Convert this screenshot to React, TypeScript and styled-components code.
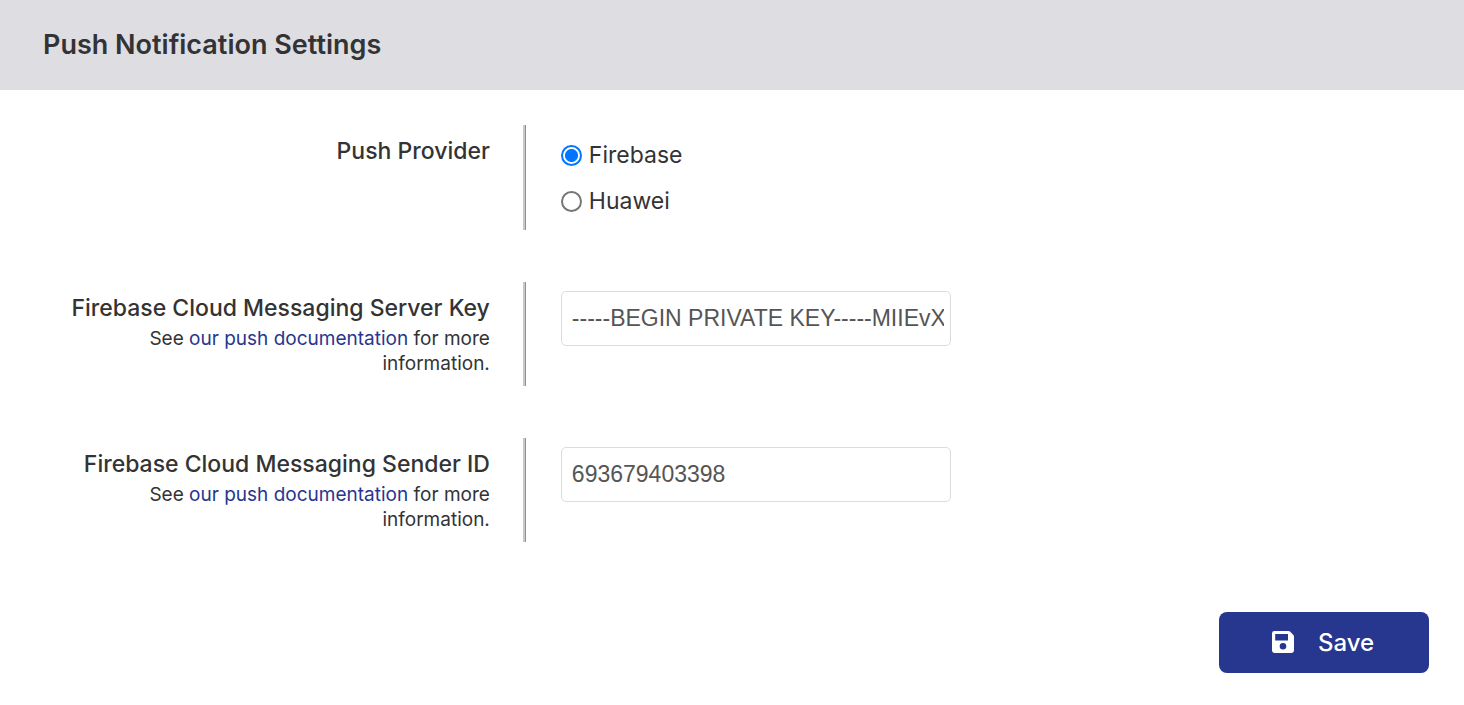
import React, { useState } from "react";
import styled, { createGlobalStyle } from "styled-components";

const GlobalStyle = createGlobalStyle`
  *, *::before, *::after { box-sizing: border-box; }
  body {
    margin: 0;
    background: #fff;
    color: #333335;
    font-family: Inter, "Liberation Sans", sans-serif;
  }
`;

const Header = styled.header`
  display: flex;
  align-items: center;
  height: 90px;
  padding: 0 43px;
  background: #dedde2;
`;

const Title = styled.h1`
  margin: 0;
  font-size: 27px;
  line-height: 32px;
  font-weight: 600;
`;

const Form = styled.form`
  padding: 35px;
`;

const Settings = styled.div`
  display: grid;
  gap: 52px;
`;

const Row = styled.div`
  display: grid;
  grid-template-columns: 25fr 46fr;
`;

const LabelColumn = styled.div`
  margin-right: 1px;
  padding: 10px 33px 10px 0;
  border-right: 2px solid #c9c9c9;
  box-shadow: 1px 0 0 #8f8f8f;
  text-align: right;
`;

const Label = styled.label`
  display: block;
  font-size: 23px;
  line-height: 32px;
  font-weight: 500;
`;

const Description = styled.p`
  margin: 2px 0 0;
  padding-left: 35px;
  font-size: 19px;
  line-height: 25px;
`;

const DocLink = styled.a`
  color: #27368e;
  text-decoration: none;
`;

const FieldColumn = styled.div<{ $group?: boolean }>`
  padding: ${(p) => (p.$group ? "7px 0 6px 35px" : "9px 0 9px 35px")};
`;

const RadioLabel = styled.label`
  display: flex;
  align-items: center;
  gap: 7px;
  width: fit-content;
  height: 46px;
  font-size: 23px;
  line-height: 32px;
`;

const Radio = styled.input`
  appearance: none;
  width: 21px;
  height: 21px;
  margin: 0;
  border: 2px solid #767676;
  border-radius: 50%;
  background: #fff;

  &:checked {
    border-color: #0075ff;
    background: radial-gradient(circle, #0075ff 6px, #fff 7px);
  }
`;

const TextInput = styled.input`
  display: block;
  width: 390px;
  max-width: 100%;
  height: 55px;
  padding: 0 6px 0 10px;
  border: 1px solid #dcdce0;
  border-radius: 5px;
  background: #fff;
  color: #555;
  font-family: "Liberation Sans", Arial, sans-serif;
  font-size: 23px;
`;

const Actions = styled.div`
  display: flex;
  justify-content: flex-end;
  margin-top: 70px;
`;

const SaveButton = styled.button`
  display: flex;
  align-items: center;
  justify-content: center;
  gap: 24px;
  width: 210px;
  height: 61px;
  padding: 0 2px 0 0;
  border: 0;
  border-radius: 8px;
  background: #27368e;
  color: #fff;
  font-family: inherit;
  font-size: 24px;
  font-weight: 500;
  cursor: pointer;
`;

const SaveIcon = () => (
  <svg width="22" height="24" viewBox="0 0 22 24" aria-hidden="true">
    <path
      fill="currentColor"
      fillRule="evenodd"
      d="M2.4 0H16.6Q17.4 0 18 .6L21.4 4Q22 4.6 22 5.4V19.6Q22 22 19.6 22H2.4Q0 22 0 19.6V2.4Q0 0 2.4 0ZM3.2 3V9.5H16V3ZM11 12A3.3 3.3 0 1 0 11 18.6A3.3 3.3 0 1 0 11 12Z"
    />
  </svg>
);

const providers = ["Firebase", "Huawei"];

const DocumentationNote = () => (
  <Description>
    See <DocLink href="#push-documentation">our push documentation</DocLink> for more information.
  </Description>
);

export default function App() {
  const [provider, setProvider] = useState("Firebase");

  return (
    <>
      <GlobalStyle />
      <Header>
        <Title>Push Notification Settings</Title>
      </Header>
      <Form onSubmit={(e) => e.preventDefault()}>
        <Settings>
          <Row role="radiogroup" aria-labelledby="provider-label">
            <LabelColumn>
              <Label as="div" id="provider-label">Push Provider</Label>
            </LabelColumn>
            <FieldColumn $group>
              {providers.map((name) => (
                <RadioLabel key={name}>
                  <Radio
                    type="radio"
                    name="provider"
                    value={name}
                    checked={provider === name}
                    onChange={() => setProvider(name)}
                  />
                  {name}
                </RadioLabel>
              ))}
            </FieldColumn>
          </Row>
          <Row>
            <LabelColumn>
              <Label htmlFor="server-key">Firebase Cloud Messaging Server Key</Label>
              <DocumentationNote />
            </LabelColumn>
            <FieldColumn>
              <TextInput id="server-key" type="text" defaultValue="-----BEGIN PRIVATE KEY-----MIIEvX" />
            </FieldColumn>
          </Row>
          <Row>
            <LabelColumn>
              <Label htmlFor="sender-id">Firebase Cloud Messaging Sender ID</Label>
              <DocumentationNote />
            </LabelColumn>
            <FieldColumn>
              <TextInput id="sender-id" type="text" defaultValue="693679403398" />
            </FieldColumn>
          </Row>
        </Settings>
        <Actions>
          <SaveButton type="submit">
            <SaveIcon />
            Save
          </SaveButton>
        </Actions>
      </Form>
    </>
  );
}
